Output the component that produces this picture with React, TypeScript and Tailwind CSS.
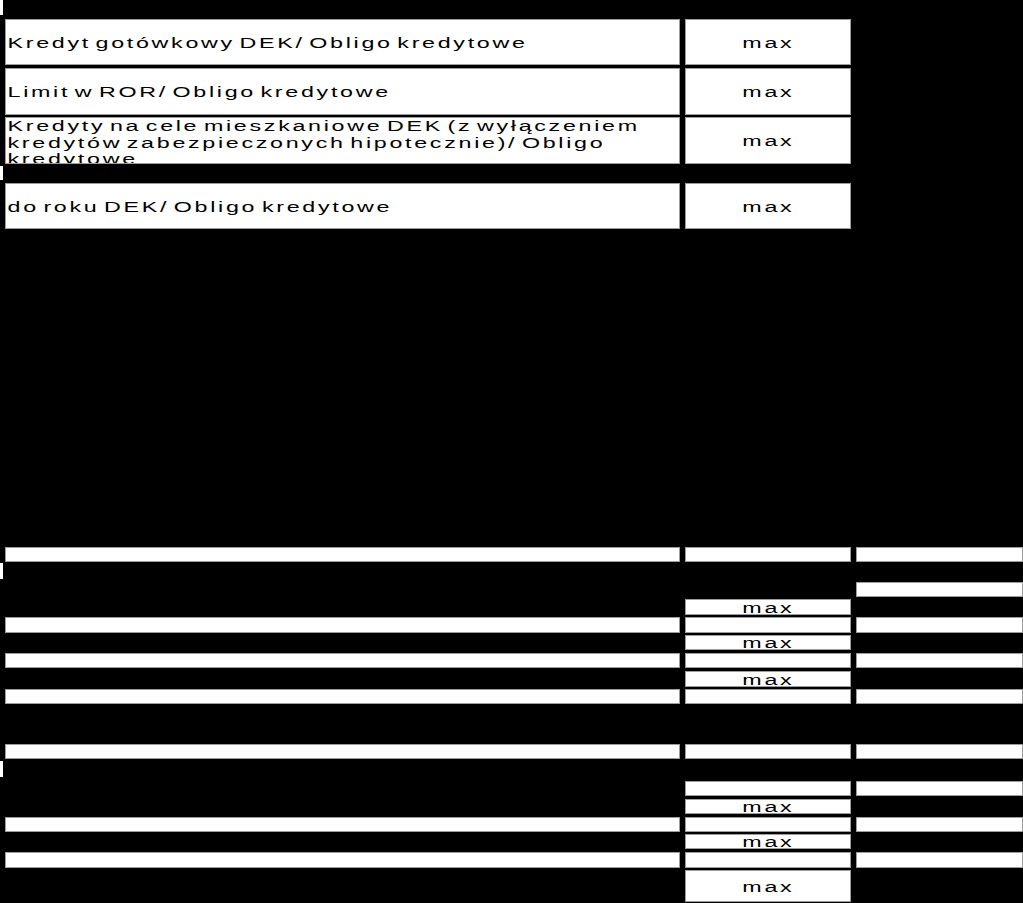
import React from 'react'

// Spreadsheet-like credit limits sheet: white cells on a black page

const Cell = ({ className = '', children }: { className?: string; children?: React.ReactNode }) => (
  <div className={`bg-white border border-[#9c9c9c] overflow-hidden ${className}`}>{children}</div>
)

const Label = ({ children }: { children: React.ReactNode }) => (
  <span className="block w-[447px] origin-left scale-x-[1.5] pl-[1px] text-[15.5px] leading-[16.5px] tracking-[1.8px] [word-spacing:-3px] text-black">
    {children}
  </span>
)

const Max = () => (
  <div className="flex h-full items-center justify-center">
    <span className="inline-block scale-x-[1.5] text-[15.5px] leading-[13px] tracking-[1.8px] text-black">max</span>
  </div>
)

const Tick = ({ className = '' }: { className?: string }) => <div className={`w-[3px] bg-white ${className}`} />

const TopRow = ({ className = '', label, top = false }: { className?: string; label: string; top?: boolean }) => (
  <div className={`flex pl-[5px] gap-[5px] ${className}`}>
    <Cell className={`w-[675px] flex ${top ? 'items-start' : 'items-center pt-[2px]'}`}>
      <Label>{label}</Label>
    </Cell>
    <Cell className="w-[166px]">
      <Max />
    </Cell>
  </div>
)

export default function App() {
  return (
    <div className="w-[1023px] h-[903px] bg-black overflow-hidden flex flex-col font-['Liberation_Sans',Arial,sans-serif]">
      {/* top block */}
      <div className="h-[19px]">
        <Tick className="h-[15px]" />
      </div>
      <TopRow className="h-[46px]" label="Kredyt gotówkowy DEK/ Obligo kredytowe" />
      <TopRow className="h-[47px] mt-[3px]" label="Limit w ROR/ Obligo kredytowe" />
      <TopRow
        className="h-[47px] mt-[2px]"
        top
        label="Kredyty na cele mieszkaniowe DEK (z wyłączeniem kredytów zabezpieczonych hipotecznie)/ Obligo kredytowe"
      />
      <div className="h-[19px] pt-[2px]">
        <Tick className="h-[14px]" />
      </div>
      <TopRow className="h-[46px]" label="do roku DEK/ Obligo kredytowe" />

      {/* section A */}
      <div className="flex mt-[318px] h-[157px]">
        <div className="w-[5px]">
          <Tick className="mt-[16px] h-[16px]" />
        </div>
        <div className="w-[675px] flex flex-col">
          <Cell className="h-[15px]" />
          <Cell className="h-[16px] mt-[55px]" />
          <Cell className="h-[15px] mt-[20px]" />
          <Cell className="h-[15px] mt-[21px]" />
        </div>
        <div className="w-[166px] ml-[5px] flex flex-col">
          <Cell className="h-[15px]" />
          <Cell className="h-[16px] mt-[37px]">
            <Max />
          </Cell>
          <Cell className="h-[16px] mt-[2px]" />
          <Cell className="h-[15px] mt-[2px]">
            <Max />
          </Cell>
          <Cell className="h-[15px] mt-[3px]" />
          <Cell className="h-[16px] mt-[3px]">
            <Max />
          </Cell>
          <Cell className="h-[15px] mt-[2px]" />
        </div>
        <div className="w-[167px] ml-[5px] flex flex-col">
          <Cell className="h-[15px]" />
          <Cell className="h-[15px] mt-[20px]" />
          <Cell className="h-[16px] mt-[20px]" />
          <Cell className="h-[15px] mt-[20px]" />
          <Cell className="h-[15px] mt-[21px]" />
        </div>
      </div>

      {/* section B */}
      <div className="flex mt-[40px] h-[159px]">
        <div className="w-[5px]">
          <Tick className="mt-[17px] h-[16px]" />
        </div>
        <div className="w-[675px] flex flex-col">
          <Cell className="h-[15px]" />
          <Cell className="h-[15px] mt-[58px]" />
          <Cell className="h-[16px] mt-[20px]" />
        </div>
        <div className="w-[166px] ml-[5px] flex flex-col">
          <Cell className="h-[15px]" />
          <Cell className="h-[15px] mt-[22px]" />
          <Cell className="h-[15px] mt-[3px]">
            <Max />
          </Cell>
          <Cell className="h-[15px] mt-[3px]" />
          <Cell className="h-[15px] mt-[2px]">
            <Max />
          </Cell>
          <Cell className="h-[16px] mt-[3px]" />
          <Cell className="h-[32px] mt-[2px]">
            <Max />
          </Cell>
        </div>
        <div className="w-[167px] ml-[5px] flex flex-col">
          <Cell className="h-[15px]" />
          <Cell className="h-[15px] mt-[22px]" />
          <Cell className="h-[15px] mt-[21px]" />
          <Cell className="h-[16px] mt-[20px]" />
        </div>
      </div>
    </div>
  )
}
